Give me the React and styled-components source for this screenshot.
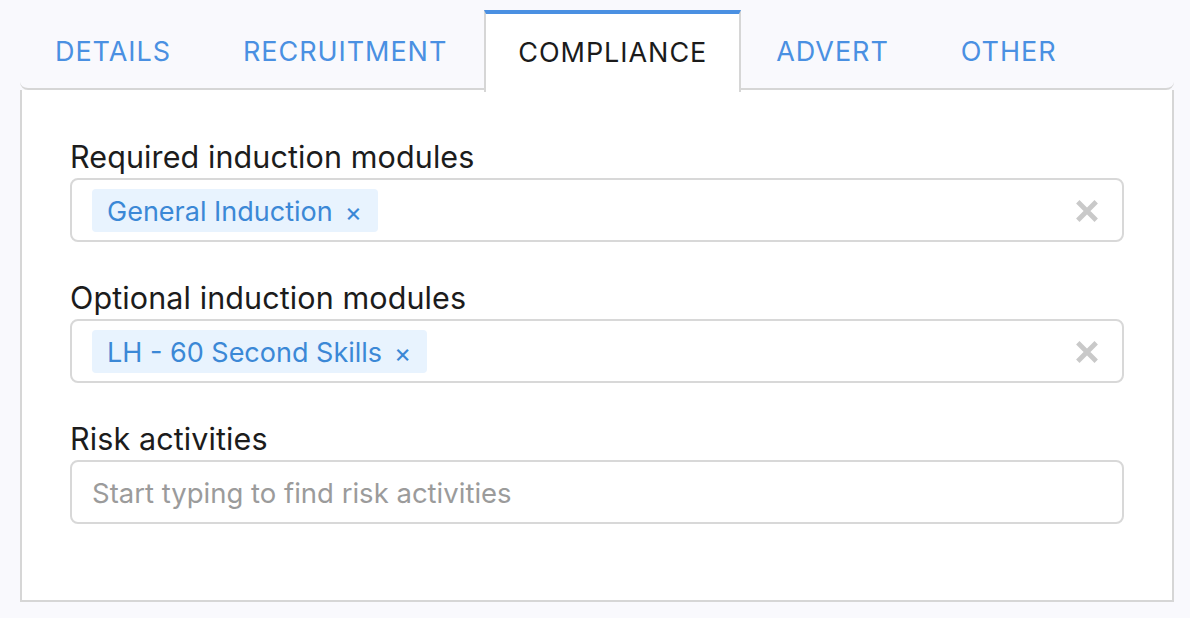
import React from "react";
import styled, { createGlobalStyle } from "styled-components";

const GlobalStyle = createGlobalStyle`
  html, body {
    margin: 0;
    padding: 0;
    background-color: #f9f9fd;
    font-family: Inter, "Noto Sans", "Liberation Sans", sans-serif;
  }
  * {
    box-sizing: border-box;
  }
`;

const tabs = ["DETAILS", "RECRUITMENT", "COMPLIANCE", "ADVERT", "OTHER"];

const fields = [
  {
    label: "Required induction modules",
    chips: ["General Induction"],
  },
  {
    label: "Optional induction modules",
    chips: ["LH - 60 Second Skills"],
  },
  {
    label: "Risk activities",
    placeholder: "Start typing to find risk activities",
  },
];

function ClearIcon() {
  return (
    <svg width="22" height="22" viewBox="0 0 22 22">
      <path
        d="M3.5 3.5 L18.5 18.5 M18.5 3.5 L3.5 18.5"
        stroke="#c9c9c9"
        strokeWidth="4.8"
        strokeLinecap="square"
      />
    </svg>
  );
}

function App() {
  return (
    <Page>
      <GlobalStyle />
      <Wrapper>
        <TabBar>
          {tabs.map((tab) => (
            <Tab key={tab} $active={tab === "COMPLIANCE"}>
              {tab}
            </Tab>
          ))}
        </TabBar>
        <Panel>
          {fields.map((field) => (
            <Field key={field.label}>
              <Label>{field.label}</Label>
              <SelectBox>
                <ChipList>
                  {field.chips &&
                    field.chips.map((chip) => (
                      <Chip key={chip}>
                        {chip}
                        <ChipRemove>×</ChipRemove>
                      </Chip>
                    ))}
                  {field.placeholder && (
                    <Placeholder>{field.placeholder}</Placeholder>
                  )}
                </ChipList>
                {field.chips && (
                  <ClearButton>
                    <ClearIcon />
                  </ClearButton>
                )}
              </SelectBox>
            </Field>
          ))}
        </Panel>
      </Wrapper>
    </Page>
  );
}

export default App;

const Page = styled.div`
  width: 1190px;
  height: 618px;
  padding: 10px 0 0 20px;
  background-color: #f9f9fd;
`;

const Wrapper = styled.div`
  width: 1154px;
`;

const TabBar = styled.div`
  display: flex;
  height: 80px;
  border-bottom: 2px solid #d6d6d6;
  border-radius: 0 0 8px 8px;
`;

const Tab = styled.div`
  display: flex;
  align-items: center;
  height: 80px;
  padding: 0 35px 0 33px;
  border: 2px solid transparent;
  border-bottom: none;
  font-size: 27px;
  letter-spacing: 0.95px;
  color: ${(p) => (p.$active ? "#1b1b1b" : "#4a90e2")};
  background-color: ${(p) => (p.$active ? "#ffffff" : "transparent")};
  ${(p) =>
    p.$active &&
    `
    border-color: #d6d6d6;
    border-top: 4px solid #4a90e2;
    padding: 0 32px 2px 32px;
    height: 82px;
    margin-bottom: -2px;
    position: relative;
  `}
`;

const Panel = styled.div`
  height: 512px;
  background-color: #ffffff;
  border: 2px solid #d6d6d6;
  border-top: none;
  padding: 50px 48px 0 48px;
  display: flex;
  flex-direction: column;
  gap: 39px;
`;

const Field = styled.div`
  display: flex;
  flex-direction: column;
  gap: 4px;
`;

const Label = styled.div`
  font-size: 30.5px;
  line-height: 34px;
  letter-spacing: 0.1px;
  color: #1c1c1c;
`;

const SelectBox = styled.div`
  display: flex;
  align-items: center;
  height: 64px;
  border: 2px solid #d8d8d8;
  border-radius: 8px;
  padding: 1px 24px 0 20px;
`;

const ChipList = styled.div`
  flex: 1;
  display: flex;
  align-items: center;
  gap: 8px;
`;

const Chip = styled.div`
  display: flex;
  align-items: center;
  gap: 12px;
  height: 43px;
  padding: 2px 16px 0 15px;
  border-radius: 4px;
  background-color: #e8f3fe;
  color: #3b88d6;
  font-size: 27px;
`;

const ChipRemove = styled.span`
  font-size: 26px;
  line-height: 1;
`;

const Placeholder = styled.span`
  font-size: 27.5px;
  color: #9b9b9b;
`;

const ClearButton = styled.div`
  display: flex;
  align-items: center;
  justify-content: center;
`;
